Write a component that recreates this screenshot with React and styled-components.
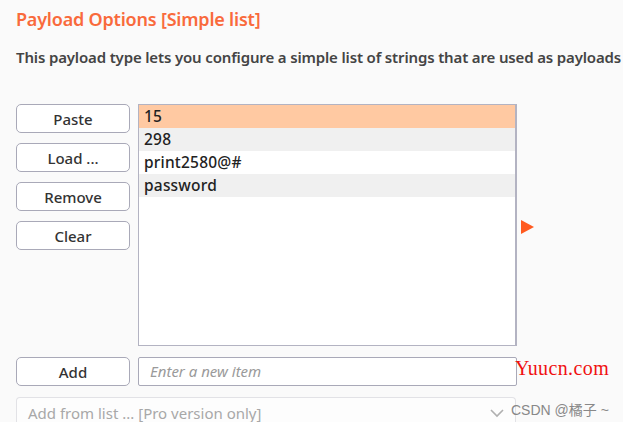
import React from "react";
import styled, { createGlobalStyle } from "styled-components";

const GlobalStyle = createGlobalStyle`
  html, body {
    margin: 0;
    padding: 0;
    background: #fafafa;
    overflow: hidden;
  }
  body {
    font-family: "Noto Sans", "Open Sans", sans-serif;
  }
`;

const Page = styled.div`
  position: relative;
  width: 623px;
  height: 422px;
  padding: 7px 0 0 16px;
  box-sizing: border-box;
  background: #fafafa;
`;

const Title = styled.h1`
  margin: 0;
  font-size: 18px;
  font-weight: 600;
  color: #f96a3c;
  letter-spacing: -0.2px;
  line-height: 24px;
`;

const Description = styled.p`
  margin: 16px 0 0;
  font-size: 15px;
  font-weight: 600;
  color: #444;
  letter-spacing: -0.15px;
  white-space: nowrap;
  line-height: 20px;
`;

const Editor = styled.div`
  display: grid;
  grid-template-columns: 114px 379px;
  column-gap: 8px;
  margin-top: 37px;
`;

const ButtonColumn = styled.div`
  display: flex;
  flex-direction: column;
  gap: 10px;
`;

const Button = styled.button`
  height: 29px;
  width: 114px;
  border: 1.5px solid #a9a9b8;
  border-radius: 5px;
  background: #fff;
  font-family: inherit;
  font-size: 15px;
  font-weight: 500;
  color: #333;
  padding: 0;
`;

const List = styled.div`
  height: 242px;
  border: 1.5px solid #b3b3c2;
  border-right-width: 2px;
  background: #fff;
  box-sizing: border-box;
`;

const Row = styled.div`
  height: 23px;
  padding-left: 5px;
  font-size: 15.5px;
  font-weight: 500;
  letter-spacing: 0.2px;
  line-height: 23px;
  color: #222;
  background: ${p => (p.$selected ? "#ffc9a2" : p.$odd ? "#f0f0f0" : "#fff")};
`;

const Arrow = styled.div`
  position: absolute;
  left: 521px;
  top: 220px;
  width: 0;
  height: 0;
  border-top: 7px solid transparent;
  border-bottom: 7px solid transparent;
  border-left: 13px solid #ff5a1f;
`;

const AddRow = styled.div`
  display: grid;
  grid-template-columns: 114px 379px;
  column-gap: 8px;
  margin-top: 11px;
`;

const Input = styled.div`
  height: 29px;
  box-sizing: border-box;
  border: 1.5px solid #a9a9b8;
  border-radius: 2px;
  background: #fff;
  padding-left: 11px;
  font-size: 15px;
  font-style: italic;
  line-height: 26px;
  color: #9a9a9a;
`;

const Select = styled.div`
  display: flex;
  align-items: center;
  justify-content: space-between;
  width: 500px;
  height: 30px;
  margin-top: 11px;
  box-sizing: border-box;
  border: 1.5px solid #e2e2e6;
  border-bottom: none;
  border-radius: 4px 4px 0 0;
  background: #fdfdfd;
  padding: 0 10px 0 11px;
  font-size: 15px;
  color: #a8a8a8;
`;

const Watermark = styled.div`
  position: absolute;
  left: 515px;
  top: 357px;
  font-family: "Liberation Serif", serif;
  font-size: 20px;
  letter-spacing: 0.4px;
  color: #f01010;
`;

const Credit = styled.div`
  position: absolute;
  left: 511px;
  top: 399px;
  font-family: "Liberation Sans", "Noto Sans CJK SC", sans-serif;
  font-size: 14px;
  color: #888;
`;

const items = ["15", "298", "print2580@#", "password"];

export default function App() {
  return (
    <Page>
      <GlobalStyle />
      <Title>Payload Options [Simple list]</Title>
      <Description>
        This payload type lets you configure a simple list of strings that are used as payloads
      </Description>
      <Editor>
        <ButtonColumn>
          <Button>Paste</Button>
          <Button>Load ...</Button>
          <Button>Remove</Button>
          <Button>Clear</Button>
        </ButtonColumn>
        <List>
          {items.map((item, i) => (
            <Row key={item} $selected={i === 0} $odd={i % 2 === 1}>
              {item}
            </Row>
          ))}
        </List>
      </Editor>
      <Arrow />
      <AddRow>
        <Button>Add</Button>
        <Input>Enter a new item</Input>
      </AddRow>
      <Select>
        <span>Add from list ... [Pro version only]</span>
        <svg width="16" height="10" viewBox="0 0 16 10">
          <path d="M2 2 L8 8 L14 2" fill="none" stroke="#b0b0b0" strokeWidth="1.6" />
        </svg>
      </Select>
      <Watermark>Yuucn.com</Watermark>
      <Credit>CSDN @橘子 ~</Credit>
    </Page>
  );
}
